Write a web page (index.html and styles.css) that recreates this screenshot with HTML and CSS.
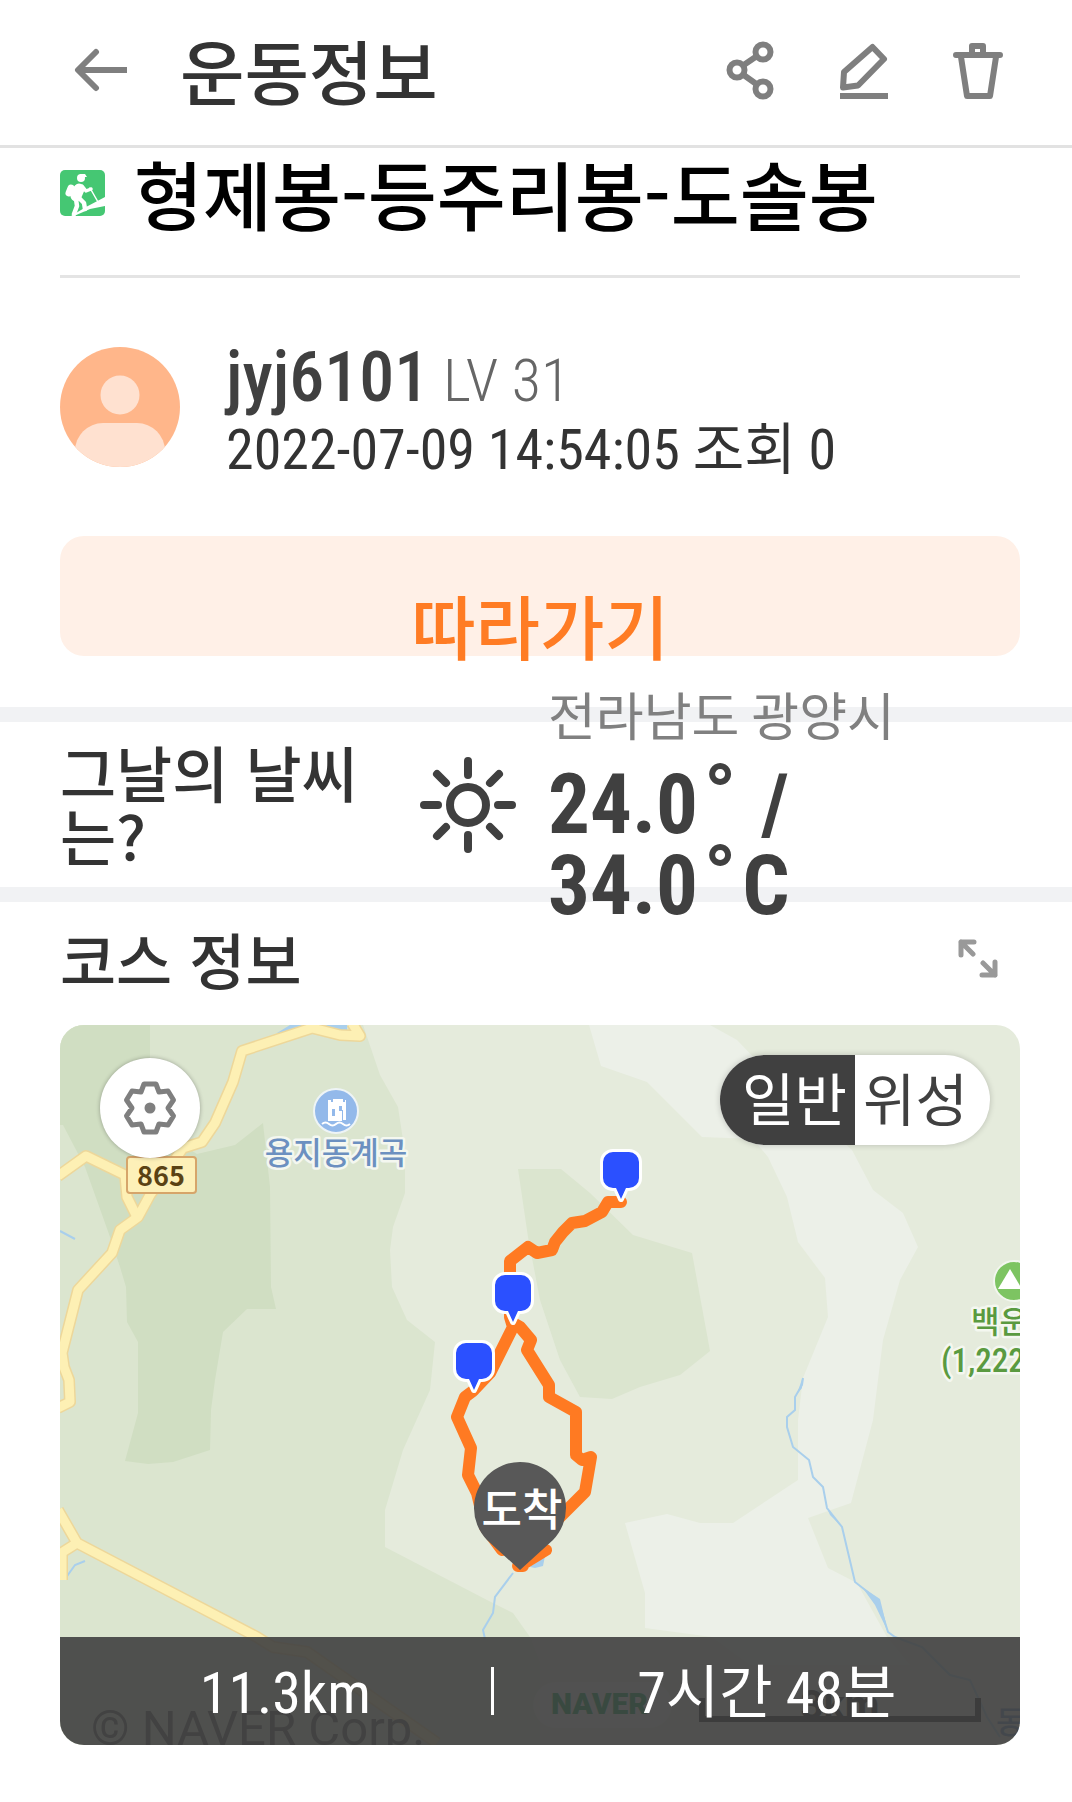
FILE: index.html
```html
<!DOCTYPE html>
<html lang="ko">

<head>
    <meta charset="UTF-8">
    <meta name="viewport" content="width=device-width, initial-scale=1.0">
    <title>운동정보</title>
    <link rel="stylesheet" href="styles.css">
</head>

<body>
    <header class="header">
        <button type="button" class="icon-btn" aria-label="뒤로">
            <svg width="54" height="48" viewBox="0 0 54 48" fill="none" stroke="#7f7f7f" stroke-width="6" stroke-linecap="round" stroke-linejoin="round">
                <path d="M22 6 4 24l18 18" />
                <path d="M4 24h49" stroke-linecap="butt" />
            </svg>
        </button>
        <h1 class="header-title">운동정보</h1>
        <div class="header-actions">
            <button type="button" class="icon-btn" aria-label="공유">
                <svg width="52" height="62" viewBox="0 0 52 62" fill="none" stroke="#7f7f7f" stroke-width="6">
                    <circle cx="13" cy="31" r="7.5" />
                    <circle cx="39" cy="13" r="7.5" />
                    <circle cx="39" cy="50" r="7.5" />
                    <path d="M19 26.5 33 17M19 35.5 33 45.5" />
                </svg>
            </button>
            <button type="button" class="icon-btn" aria-label="수정">
                <svg width="52" height="62" viewBox="0 0 52 62" fill="none" stroke="#7f7f7f" stroke-width="6" stroke-linejoin="round">
                    <path d="M34.5 8 46 20 20 46.5 5 48.5 6 33Z" />
                    <path d="M2 57h48" />
                </svg>
            </button>
            <button type="button" class="icon-btn" aria-label="삭제">
                <svg width="52" height="62" viewBox="0 0 52 62" fill="none" stroke="#7f7f7f" stroke-width="6" stroke-linecap="round" stroke-linejoin="round">
                    <path d="M4 16h44M20 14V7h11v7M9 18l6 39h23l6-39" />
                </svg>
            </button>
        </div>
    </header>

    <main>
        <section class="course-title">
            <svg width="46" height="46" viewBox="0 0 46 46">
                <rect width="45" height="46" rx="5" fill="#45c773" />
                <g fill="none" stroke="#fff" stroke-linecap="round" stroke-linejoin="round">
                    <path d="M19 19 16 26" stroke-width="11" />
                    <path d="M11 18 9 23" stroke-width="7" />
                    <path d="M22 16l4 5 5-2" stroke-width="3.5" />
                    <path d="M16 29l1 7-3 8" stroke-width="4.5" />
                    <path d="M19 28l5 5 1 6" stroke-width="4.5" />
                    <path d="M30 18l8 14" stroke-width="1.5" />
                </g>
                <circle cx="21" cy="8" r="4" fill="#fff" />
                <path d="M20 4h5l2 3h-6z" fill="#fff" />
                <path d="M11 46 26 37 45 27v9L30 39 14 46z" fill="#fff" />
            </svg>
            <h2 class="course-name">형제봉-등주리봉-도솔봉</h2>
        </section>

        <section class="profile">
            <svg class="avatar" width="120" height="120" viewBox="0 0 120 120">
                <defs>
                    <clipPath id="avatarClip"><circle cx="60" cy="60" r="60" /></clipPath>
                </defs>
                <g clip-path="url(#avatarClip)">
                    <rect width="120" height="120" fill="#ffb68a" />
                    <circle cx="60" cy="48" r="19.5" fill="#ffe1d0" />
                    <rect x="15" y="76" width="90" height="60" rx="28" fill="#ffe1d0" />
                </g>
            </svg>
            <div>
                <p class="user"><strong class="user-name">jyj6101</strong> <span class="user-level">LV 31</span></p>
                <p class="date">2022-07-09 14:54:05 조회 0</p>
            </div>
        </section>

        <div class="follow">
            <button type="button" class="follow-btn">따라가기</button>
        </div>

        <section class="weather">
            <h3 class="weather-label">그날의 날씨는?</h3>
            <svg class="weather-icon" width="96" height="96" viewBox="0 0 96 96" fill="none" stroke="#404040" stroke-width="8" stroke-linecap="round">
                <circle cx="48" cy="48" r="18" />
                <path d="M48 4v14M48 78v14M4 48h14M78 48h14M17 17l9 9M70 70l9 9M17 79l9-9M70 26l9-9" />
            </svg>
            <div class="weather-info">
                <p class="region">전라남도 광양시</p>
                <p class="temp">24.0<span class="deg">°</span> / 34.0<span class="deg">°</span>C</p>
            </div>
        </section>

        <section class="course">
            <div class="course-head">
                <h3>코스 정보</h3>
                <button type="button" class="icon-btn" aria-label="크게 보기">
                    <svg width="40" height="40" viewBox="0 0 40 40" fill="none" stroke="#999" stroke-width="5" stroke-linecap="round" stroke-linejoin="round">
                        <path d="M16 3H3v13M3 3l12 12M37 23v13H24M37 36 25 24" />
                    </svg>
                </button>
            </div>

            <div class="map">
                <svg class="map-canvas" viewBox="0 0 960 720" preserveAspectRatio="xMidYMid slice">
                    <defs>
                        <path id="pin" d="M-8-47H8a10 10 0 0 1 10 10v16a10 10 0 0 1-10 10H5L0 0l-5-11h-3a10 10 0 0 1-10-10v-16a10 10 0 0 1 10-10Z" />
                    </defs>
                    <rect width="960" height="720" fill="#e5ebdc" />

                    <!-- 숲 -->
                    <path fill="#dbe5cf" d="M0 0H303L320 50 338 82 345 128V168L333 202 330 225 332 262 347 295 375 317 370 365 343 425 325 485V522L427 575 453 588 470 612 480 638V720H0Z" />
                    <path fill="#d0dec2" d="M0 0H90V100L137 129 175 120 203 98 210 162 211 262 216 284H187L163 307 155 355 151 385 150 425 113 437 88 439 65 436 78 388V317L67 297 66 262 60 242 50 212 25 142 3 100H0Z" />
                    <path fill="#dbe5cf" d="M458 144H501L530 168 573 210 632 228 650 326 620 350 580 362 552 374 520 372 500 335 480 275 468 212Z" />
                    <path fill="#ecf0e8" d="M529 0 541 41 587 57 642 112 693 114 708 132 727 172 738 217 765 253 768 292 743 353 738 395V455L673 498H640L607 489 565 498 585 568V603L652 612 690 640H850L827 612 797 558 768 543 748 493 791 478 813 395 818 355 823 315 840 255 858 222 843 188 813 165 792 125 720 60 677 15 650 0Z" />

                    <!-- 물길 -->
                    <g fill="none" stroke="#a9cfec" stroke-width="2">
                        <path d="M743 353 742 360 735 372V385L727 392V402L733 422 749 435 753 452 763 462 767 483 782 502 795 557 818 575 828 607 835 612 862 622 890 650 910 655 927 692 940 712" />
                        <path d="M453 548 435 572 433 588 423 605 425 614" />
                        <path d="M25 536 15 540 5 554M0 206 15 214" />
                    </g>
                    <path fill="#a9cfec" d="M217 8 230 0H250L225 12ZM265 0H287V9ZM767 483 782 502 770 490ZM802 562 820 574 828 607 815 580ZM742 354V363L737 369ZM470 542 485 531 483 541 475 543Z" />

                    <!-- 도로 -->
                    <g fill="none" stroke-linejoin="round">
                        <g stroke="#edd79a" stroke-width="12">
                            <path d="M292-2 300 11 280 10 252 3 182 26 173 57 155 98 142 117 123 123 90 170 78 192 60 205 52 228 18 265 2 328 4 342 9 355 10 377-2 383" />
                            <path d="M-2 151 26 131 65 150 67 172 78 194" />
                            <path d="M-2 485 17 518 197 612 213 622 247 627 377 718M17 518-2 530M2 530V555" />
                        </g>
                        <g stroke="#fdf0b4" stroke-width="9">
                            <path d="M292-2 300 11 280 10 252 3 182 26 173 57 155 98 142 117 123 123 90 170 78 192 60 205 52 228 18 265 2 328 4 342 9 355 10 377-2 383" />
                            <path d="M-2 151 26 131 65 150 67 172 78 194" />
                            <path d="M-2 485 17 518 197 612 213 622 247 627 377 718M17 518-2 530M2 530V555" />
                        </g>
                    </g>
                    <rect x="67" y="132" width="69" height="36" rx="3" fill="#fdf0b8" stroke="#d6a56a" stroke-width="2" />
                    <text class="road-no" x="101" y="161">865</text>

                    <!-- 지명 -->
                    <circle cx="276" cy="86" r="22" fill="#93b9ea" stroke="#eef4f6" stroke-width="2" />
                    <path d="M268 75h3v2h2v-3h10v3h2v-2h1v20h-3V85h-1v11h-14Z" fill="#fff" />
                    <path d="M262 99q3.5-3 7 0t7 0 7 0 7 0" fill="none" stroke="#fff" stroke-width="2" />
                    <path d="M272 84v7h3v-7ZM279 81v5h3v-5Z" fill="#93b9ea" />
                    <text class="place valley" x="276" y="139">용지동계곡</text>
                    <circle cx="954" cy="256" r="20" fill="#7dc462" stroke="#f2f6ee" stroke-width="2" />
                    <path d="M938 264 950 244 962 264Z" fill="#fff" />
                    <text class="place peak" x="911" y="308">백운산</text>
                    <text class="place peak height" x="881" y="347">(1,222m)</text>

                    <!-- 이동 경로 -->
                    <path fill="none" stroke="#ff7a22" stroke-width="12" stroke-linecap="round" stroke-linejoin="round"
                        d="M561 177H548L542 187 525 196 512 198 503 207 495 217 492 225 477 228 468 222 450 236V292L453 302 430 348 413 366 405 372 397 392 411 423 408 450 417 468 425 502 442 525M453 298 460 302 471 315 467 325 489 360V372L516 387V430L522 435 531 432 525 467 507 485 480 512M460 541 486 525M458 541H463" />
                    <g fill="#2b50ff" stroke="#fff" stroke-width="6" stroke-linejoin="round" paint-order="stroke">
                        <use href="#pin" x="561" y="174" />
                        <use href="#pin" x="453" y="297" />
                        <use href="#pin" x="414" y="365" />
                    </g>
                    <path fill="#585858" d="M460 545 427 515A46 46 0 1 1 493 515Z" />
                    <text class="arrive" x="462" y="501">도착</text>

                    <!-- 지도 저작권, 축척 -->
                    <text class="copyright" x="31" y="720">© NAVER Corp.</text>
                    <rect x="473" y="657" width="139" height="46" rx="23" fill="#fff" opacity=".5" />
                    <text class="naver" x="491" y="689">NAVER</text>
                    <path d="M642 673V694H918V673" fill="none" stroke="#222" stroke-width="6" />
                    <text class="scale" x="780" y="694">3km</text>
                    <text class="place stream" x="936" y="708">동</text>
                </svg>

                <button type="button" class="map-setting" aria-label="지도 설정">
                    <svg width="60" height="60" viewBox="-30 -30 60 60">
                        <path d="M-6-24H6L9-16 18-17 23.5-8 18 0 23.5 8 18 17 9 16 6 24H-6L-9 16-18 17-23.5 8-18 0-23.5-8-18-17-9-16Z" fill="none" stroke="#7f7f7f" stroke-width="5" stroke-linejoin="round" />
                        <circle r="5.5" fill="#7f7f7f" />
                    </svg>
                </button>

                <div class="map-type">
                    <button type="button" class="type-btn active">일반</button>
                    <button type="button" class="type-btn">위성</button>
                </div>

                <div class="map-summary">
                    <span>11.3km</span>
                    <i class="bar"></i>
                    <span>7시간 48분</span>
                </div>
            </div>
        </section>
    </main>
</body>

</html>
```

FILE: styles.css
```css
* {
    box-sizing: border-box;
    margin: 0;
    padding: 0;
}

body {
    background: #fff;
    color: #333;
    font-family: 'Roboto Condensed', 'Noto Sans CJK KR', sans-serif;
}

button {
    border: 0;
    background: none;
    font-family: inherit;
    cursor: pointer;
}

svg {
    display: block;
    flex-shrink: 0;
}

h1,
h2,
h3 {
    font-family: 'Noto Sans CJK KR', sans-serif;
    font-weight: 500;
}

/* 상단 헤더 */
.header {
    display: flex;
    align-items: center;
    padding: 14px 68px 19px 74px;
    border-bottom: 3px solid #e2e2e2;
}

.header-title {
    margin-left: 52px;
    font-size: 70px;
    line-height: 112px;
}

.header-actions {
    display: flex;
    gap: 62px;
    margin-left: auto;
}

/* 코스 이름 */
.course-title {
    display: flex;
    align-items: center;
    gap: 28px;
    margin: 0 52px 0 60px;
    padding-bottom: 37px;
    border-bottom: 3px solid #e4e4e4;
}

.course-name {
    color: #000;
    font-size: 75px;
    line-height: 90px;
}

/* 작성자 */
.profile {
    display: flex;
    gap: 46px;
    padding: 69px 52px 47px 60px;
}

.user {
    font-size: 60px;
    line-height: 60px;
}

.user-name {
    color: #404040;
    font-size: 70px;
    font-weight: 500;
}

.user-level {
    color: #666;
    font-weight: 300;
}

.date {
    font-size: 56px;
    line-height: 78px;
}

/* 따라가기 */
.follow {
    padding: 0 52px 51px 60px;
}

.follow-btn {
    display: flex;
    justify-content: center;
    align-items: flex-start;
    width: 100%;
    height: 120px;
    padding-top: 45px;
    border-radius: 24px;
    background: #fff0e7;
    color: #ff7c24;
    font-size: 70px;
    font-weight: 500;
    line-height: 100px;
}

/* 날씨 */
.weather {
    display: flex;
    align-items: center;
    height: 195px;
    padding: 0 52px 0 60px;
    border-top: 15px solid #f1f2f4;
    border-bottom: 15px solid #f1f2f4;
}

.weather-label {
    flex: 0 1 312px;
    padding-bottom: 4px;
    font-size: 61px;
    line-height: 63px;
    word-break: break-all;
}

.weather-icon {
    margin: 0 32px 0 48px;
}

.weather-info {
    max-width: 400px;
}

.region {
    color: #808080;
    font-size: 52px;
    line-height: 84px;
}

.temp {
    padding: 3px 0 6px;
    color: #404040;
    font-size: 83px;
    font-weight: 700;
    line-height: 81px;
}

.deg {
    margin: 0 6px;
    line-height: 0;
    vertical-align: 10px;
}

/* 코스 정보 */
.course {
    padding: 0 52px 57px 60px;
}

.course-head {
    display: flex;
    justify-content: space-between;
    align-items: center;
    padding: 12px 22px 21px 0;
}

.course-head h3 {
    font-size: 61px;
    line-height: 90px;
}

.map {
    position: relative;
    overflow: hidden;
    border-radius: 24px;
}

.map-canvas {
    width: 100%;
    height: auto;
}

.map-setting {
    position: absolute;
    top: 33px;
    left: 40px;
    padding: 20px;
    border-radius: 50%;
    background: #fff;
    box-shadow: 0 0 4px rgba(0, 0, 0, .3);
}

.map-type {
    position: absolute;
    top: 30px;
    right: 30px;
    display: flex;
    overflow: hidden;
    border-radius: 45px;
    background: #fff;
    box-shadow: 0 0 6px rgba(0, 0, 0, .2);
}

.type-btn {
    width: 135px;
    padding: 4px 22px 0 8px;
    color: #404040;
    font-size: 57px;
    line-height: 86px;
}

.type-btn.active {
    padding: 4px 8px 0 22px;
    background: #404040;
    color: #fff;
}

.map-summary {
    position: absolute;
    right: 0;
    bottom: 0;
    left: 0;
    display: grid;
    grid-template-columns: 9fr 3px 11fr;
    align-items: center;
    background: rgba(63, 63, 63, .9);
    color: #fff;
    font-size: 58px;
    line-height: 104px;
    text-align: center;
}

.map-summary span {
    padding: 4px 0 0 20px;
}

.bar {
    height: 48px;
    background: #fff;
}

/* 지도 글자 */
.road-no {
    fill: #5a4214;
    font: 700 27px 'Noto Sans CJK KR', sans-serif;
    text-anchor: middle;
}

.place {
    font: 500 31px 'Noto Sans CJK KR', sans-serif;
    stroke: #f4f7f0;
    stroke-width: 5px;
    stroke-linejoin: round;
    paint-order: stroke;
}

.valley {
    fill: #6c90c0;
    text-anchor: middle;
}

.peak {
    fill: #5a9a40;
}

.height {
    font: 500 33px 'Roboto Condensed', sans-serif;
}

.stream {
    fill: #6c90c0;
    stroke: none;
}

.arrive {
    fill: #fff;
    font: 500 44px 'Noto Sans CJK KR', sans-serif;
    text-anchor: middle;
}

.copyright {
    fill: #5a5a5a;
    font: 400 49px Roboto, sans-serif;
}

.naver {
    fill: #03a04a;
    font: 900 30px Roboto, sans-serif;
}

.scale {
    fill: #222;
    font: 700 40px Roboto, sans-serif;
    text-anchor: middle;
}
```
